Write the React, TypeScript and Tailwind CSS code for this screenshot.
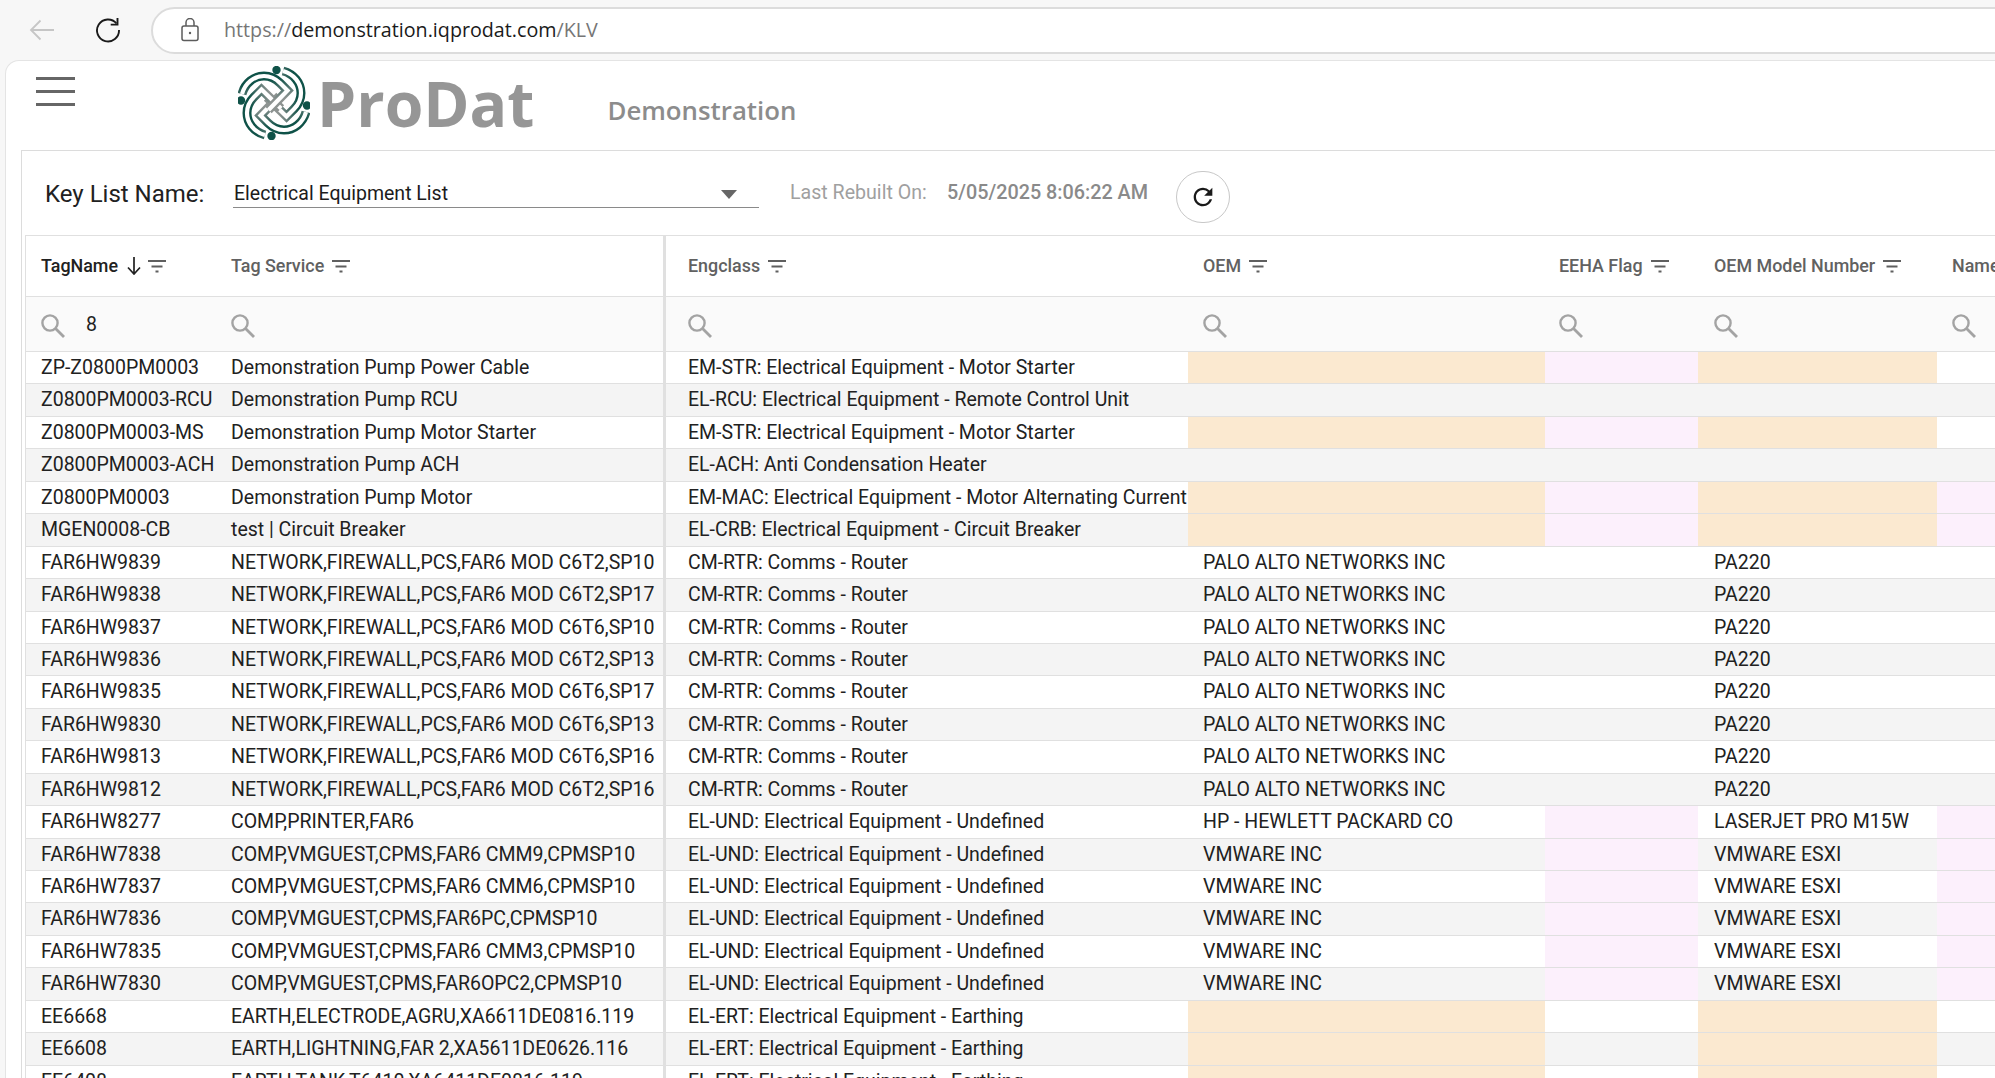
import { MdRefresh } from "react-icons/md";

type Row = { a: string; b: string; c: string; d?: string; f?: string; oem?: boolean; ee?: boolean; nm?: boolean };

const rtr = "CM-RTR: Comms - Router";
const und = "EL-UND: Electrical Equipment - Undefined";
const ert = "EL-ERT: Electrical Equipment - Earthing";
const pa = "PALO ALTO NETWORKS INC";
const vm = "VMWARE INC";
const esxi = "VMWARE ESXI";

const rows: Row[] = [
  { a: "ZP-Z0800PM0003", b: "Demonstration Pump Power Cable", c: "EM-STR: Electrical Equipment - Motor Starter", oem: true, ee: true },
  { a: "Z0800PM0003-RCU", b: "Demonstration Pump RCU", c: "EL-RCU: Electrical Equipment - Remote Control Unit" },
  { a: "Z0800PM0003-MS", b: "Demonstration Pump Motor Starter", c: "EM-STR: Electrical Equipment - Motor Starter", oem: true, ee: true },
  { a: "Z0800PM0003-ACH", b: "Demonstration Pump ACH", c: "EL-ACH: Anti Condensation Heater" },
  { a: "Z0800PM0003", b: "Demonstration Pump Motor", c: "EM-MAC: Electrical Equipment - Motor Alternating Current", oem: true, ee: true, nm: true },
  { a: "MGEN0008-CB", b: "test | Circuit Breaker", c: "EL-CRB: Electrical Equipment - Circuit Breaker", oem: true, ee: true, nm: true },
  { a: "FAR6HW9839", b: "NETWORK,FIREWALL,PCS,FAR6 MOD C6T2,SP10", c: rtr, d: pa, f: "PA220" },
  { a: "FAR6HW9838", b: "NETWORK,FIREWALL,PCS,FAR6 MOD C6T2,SP17", c: rtr, d: pa, f: "PA220" },
  { a: "FAR6HW9837", b: "NETWORK,FIREWALL,PCS,FAR6 MOD C6T6,SP10", c: rtr, d: pa, f: "PA220" },
  { a: "FAR6HW9836", b: "NETWORK,FIREWALL,PCS,FAR6 MOD C6T2,SP13", c: rtr, d: pa, f: "PA220" },
  { a: "FAR6HW9835", b: "NETWORK,FIREWALL,PCS,FAR6 MOD C6T6,SP17", c: rtr, d: pa, f: "PA220" },
  { a: "FAR6HW9830", b: "NETWORK,FIREWALL,PCS,FAR6 MOD C6T6,SP13", c: rtr, d: pa, f: "PA220" },
  { a: "FAR6HW9813", b: "NETWORK,FIREWALL,PCS,FAR6 MOD C6T6,SP16", c: rtr, d: pa, f: "PA220" },
  { a: "FAR6HW9812", b: "NETWORK,FIREWALL,PCS,FAR6 MOD C6T2,SP16", c: rtr, d: pa, f: "PA220" },
  { a: "FAR6HW8277", b: "COMP,PRINTER,FAR6", c: und, d: "HP - HEWLETT PACKARD CO", f: "LASERJET PRO M15W", ee: true, nm: true },
  { a: "FAR6HW7838", b: "COMP,VMGUEST,CPMS,FAR6 CMM9,CPMSP10", c: und, d: vm, f: esxi, ee: true, nm: true },
  { a: "FAR6HW7837", b: "COMP,VMGUEST,CPMS,FAR6 CMM6,CPMSP10", c: und, d: vm, f: esxi, ee: true, nm: true },
  { a: "FAR6HW7836", b: "COMP,VMGUEST,CPMS,FAR6PC,CPMSP10", c: und, d: vm, f: esxi, ee: true, nm: true },
  { a: "FAR6HW7835", b: "COMP,VMGUEST,CPMS,FAR6 CMM3,CPMSP10", c: und, d: vm, f: esxi, ee: true, nm: true },
  { a: "FAR6HW7830", b: "COMP,VMGUEST,CPMS,FAR6OPC2,CPMSP10", c: und, d: vm, f: esxi, ee: true, nm: true },
  { a: "EE6668", b: "EARTH,ELECTRODE,AGRU,XA6611DE0816.119", c: ert, oem: true },
  { a: "EE6608", b: "EARTH,LIGHTNING,FAR 2,XA5611DE0626.116", c: ert, oem: true },
  { a: "EE6408", b: "EARTH,TANK,T6410,XA6411DE0816.119", c: ert, oem: true },
];

const W = ["w-[190px]", "w-[450px]", "w-[522px]", "w-[357px]", "w-[153px]", "w-[239px]", "w-[120px]"];
const P = ["pl-[15px]", "pl-[15px]", "pl-[22px]", "pl-[15px]", "pl-[14px]", "pl-[16px]", "pl-[15px]"];

function FilterIcon() {
  return (
    <svg width="18" height="13" viewBox="0 0 18 13" className="shrink-0 ml-[8px]">
      <path d="M0 1h18M3.5 6.5h11M7.5 11.5h3" stroke="#5f5f5f" strokeWidth="2" fill="none" />
    </svg>
  );
}

function SearchIcon() {
  return (
    <svg width="24" height="24" viewBox="0 0 24 24" className="shrink-0 mt-[3px]">
      <circle cx="9" cy="9" r="7.6" stroke="#a3a3a3" strokeWidth="2.4" fill="none" />
      <path d="M14.5 14.5L23 23" stroke="#a3a3a3" strokeWidth="2.8" fill="none" />
    </svg>
  );
}

function Logo() {
  const arm = "M9 -32 C20 -29 27 -20 27 -10 C27 -3 24 2 20 6 L12.5 13.5 L-7 -5.5";
  return (
    <svg width="72" height="74" viewBox="-36 -37 72 74" className="shrink-0">
      <defs>
        <linearGradient id="armGrad" gradientUnits="userSpaceOnUse" x1="24" y1="2" x2="4" y2="6">
          <stop offset="0" stopColor="#0f5248" />
          <stop offset="1" stopColor="#8d9391" />
        </linearGradient>
      </defs>
      {[0, 90, 180, 270].map((r) => (
        <g key={r} transform={`rotate(${r})`}>
          <path d={arm} fill="none" stroke="url(#armGrad)" strokeWidth="9" />
          <path d={arm} fill="none" stroke="#ffffff" strokeWidth="4.2" />
          <circle cx="2.5" cy="-33" r="4.2" fill="#0f5248" />
        </g>
      ))}
    </svg>
  );
}

export default function App() {
  return (
    <div className="w-[1995px] h-[1078px] overflow-hidden bg-[#f7f7f7] flex flex-col font-['Roboto',sans-serif] text-[19.5px] text-[#212121]">
      <div className="h-[60px] shrink-0 flex items-center overflow-hidden">
        <svg width="26" height="22" viewBox="0 0 26 22" className="ml-[29px] shrink-0">
          <path d="M25 11H2M11.5 1.5L2 11l9.5 9.5" stroke="#c6c6c6" strokeWidth="1.8" fill="none" />
        </svg>
        <svg width="26" height="26" viewBox="0 0 26 26" className="ml-[40px] shrink-0">
          <path d="M21.5 6.5A11 11 0 1 0 24 13" stroke="#1a1a1a" strokeWidth="1.9" fill="none" />
          <path d="M22.5 1v6.6h-6.8" stroke="#1a1a1a" strokeWidth="1.9" fill="none" />
        </svg>
        <div className="ml-[30px] h-[47px] flex-1 -mr-[40px] rounded-full border-2 border-[#dcdcdc] bg-white flex items-center">
          <svg width="20" height="24" viewBox="0 0 20 24" className="ml-[27px] shrink-0">
            <rect x="2" y="8" width="16" height="14.5" rx="2" stroke="#5c5c5c" strokeWidth="1.5" fill="none" />
            <path d="M6 8V4.5a4 4 0 0 1 8 0V8" stroke="#5c5c5c" strokeWidth="1.5" fill="none" />
            <circle cx="10" cy="15" r="1.2" fill="#5c5c5c" />
          </svg>
          <div className="ml-[24px] font-['Open_Sans',sans-serif] text-[19.7px] text-[#767676] whitespace-nowrap">
            https://<span className="text-[#1a1a1a]">demonstration.iqprodat.com</span>/KLV
          </div>
        </div>
      </div>

      <div className="flex-1 ml-[5px] bg-white border-l border-t border-[#e4e4e4] rounded-tl-[14px] flex flex-col min-h-0">
        <div className="h-[89px] shrink-0 flex">
          <div className="ml-[30px] mt-[16px] w-[39px] h-[29px] flex flex-col justify-between shrink-0">
            <div className="h-[3px] bg-[#666666]" />
            <div className="h-[3px] bg-[#666666]" />
            <div className="h-[3px] bg-[#666666]" />
          </div>
          <div className="ml-[163px] mt-[5px] shrink-0">
            <Logo />
          </div>
          <div className="ml-[7px] mt-[-3px] h-[89px] flex items-center font-['Open_Sans',sans-serif] font-bold text-[62.5px] text-[#969696] shrink-0">
            ProDat
          </div>
          <div className="ml-[73px] mt-[26px] h-[46px] flex items-center font-['Open_Sans',sans-serif] font-semibold text-[25.8px] text-[#8c8c8c] shrink-0">
            Demonstration
          </div>
        </div>

        <div className="flex-1 ml-[15px] border-l border-t border-[#dcdcdc] pl-[3px] flex flex-col min-h-0">
          <div className="h-[84px] shrink-0 flex">
            <div className="ml-[20px] mt-[29px] text-[24px] leading-[28px] whitespace-nowrap w-[188px] shrink-0">Key List Name:</div>
            <div className="mt-[28px] w-[526px] h-[28px] border-b border-[#8a8a8a] box-content flex items-center justify-between shrink-0">
              <span className="text-[19.5px] pl-[1px] pt-[2px] text-[#1c1c1c]">Electrical Equipment List</span>
              <svg width="16" height="9" viewBox="0 0 16 9" className="mr-[22px] mt-[2px]">
                <path d="M0 0h16L8 9z" fill="#666666" />
              </svg>
            </div>
            <div className="ml-[31px] mt-[29px] text-[19.6px] leading-[26px] text-[#a0a0a0] whitespace-nowrap w-[157px] shrink-0">Last Rebuilt On:</div>
            <div className="mt-[29px] text-[19.8px] leading-[26px] font-medium text-[#8a8a8a] whitespace-nowrap w-[229px] shrink-0">5/05/2025 8:06:22 AM</div>
            <div className="mt-[20px] w-[54px] h-[52px] rounded-full border border-[#c8c8c8] flex items-center justify-center shrink-0">
              <MdRefresh size={28} color="#1a1a1a" />
            </div>
          </div>

          <div className="flex-1 border-l border-t border-[#e0e0e0] overflow-hidden min-h-0">
            <div className="h-[61px] flex border-b border-[#e0e0e0] text-[17.9px] font-medium text-[#616161]">
              {["TagName", "Tag Service", "Engclass", "OEM", "EEHA Flag", "OEM Model Number", "Name"].map((h, i) => (
                <div key={h} className={`${W[i]} ${P[i]} shrink-0 flex items-center whitespace-nowrap ${i === 1 ? "border-r-[3px] border-[#e0e0e0]" : ""} ${i === 0 ? "text-[#212121]" : ""}`}>
                  <span>{h}</span>
                  {i === 0 && (
                    <svg width="14" height="18" viewBox="0 0 14 18" className="ml-[9px] -mr-[1px] shrink-0">
                      <path d="M7 0v16.5M1 10.5l6 6.5 6-6.5" stroke="#212121" strokeWidth="1.7" fill="none" />
                    </svg>
                  )}
                  {i !== 6 && <FilterIcon />}
                </div>
              ))}
            </div>
            <div className="h-[55px] flex border-b border-[#e0e0e0] bg-[#fafafa]">
              {W.map((w, i) => (
                <div key={i} className={`${w} ${P[i]} shrink-0 flex items-center ${i === 1 ? "border-r-[3px] border-[#e0e0e0]" : ""}`}>
                  <SearchIcon />
                  {i === 0 && <span className="ml-[21px] mt-[1px]">8</span>}
                </div>
              ))}
            </div>
            {rows.map((r, idx) => {
              const even = idx % 2 === 1;
              return (
                <div key={r.a} className={`h-[32.45px] flex border-b border-[#e0e0e0] whitespace-nowrap leading-[32px] ${even ? "bg-[#f4f4f4]" : "bg-white"}`}>
                  <div className={`${W[0]} ${P[0]} shrink-0 overflow-hidden`}>{r.a}</div>
                  <div className={`${W[1]} ${P[1]} shrink-0 overflow-hidden border-r-[3px] border-[#e0e0e0]`}>{r.b}</div>
                  <div className={`${W[2]} ${P[2]} shrink-0 overflow-hidden`}>{r.c}</div>
                  <div className={`${W[3]} ${P[3]} shrink-0 overflow-hidden ${r.oem ? "bg-[#fbe9d0]" : ""}`}>{r.d}</div>
                  <div className={`${W[4]} ${P[4]} shrink-0 ${r.ee ? "bg-[#fcf0fc]" : ""}`} />
                  <div className={`${W[5]} ${P[5]} shrink-0 overflow-hidden ${r.oem ? "bg-[#fbe9d0]" : ""}`}>{r.f}</div>
                  <div className={`${W[6]} shrink-0 ${r.nm ? "bg-[#fcf0fc]" : ""}`} />
                </div>
              );
            })}
          </div>
        </div>
      </div>
    </div>
  );
}
